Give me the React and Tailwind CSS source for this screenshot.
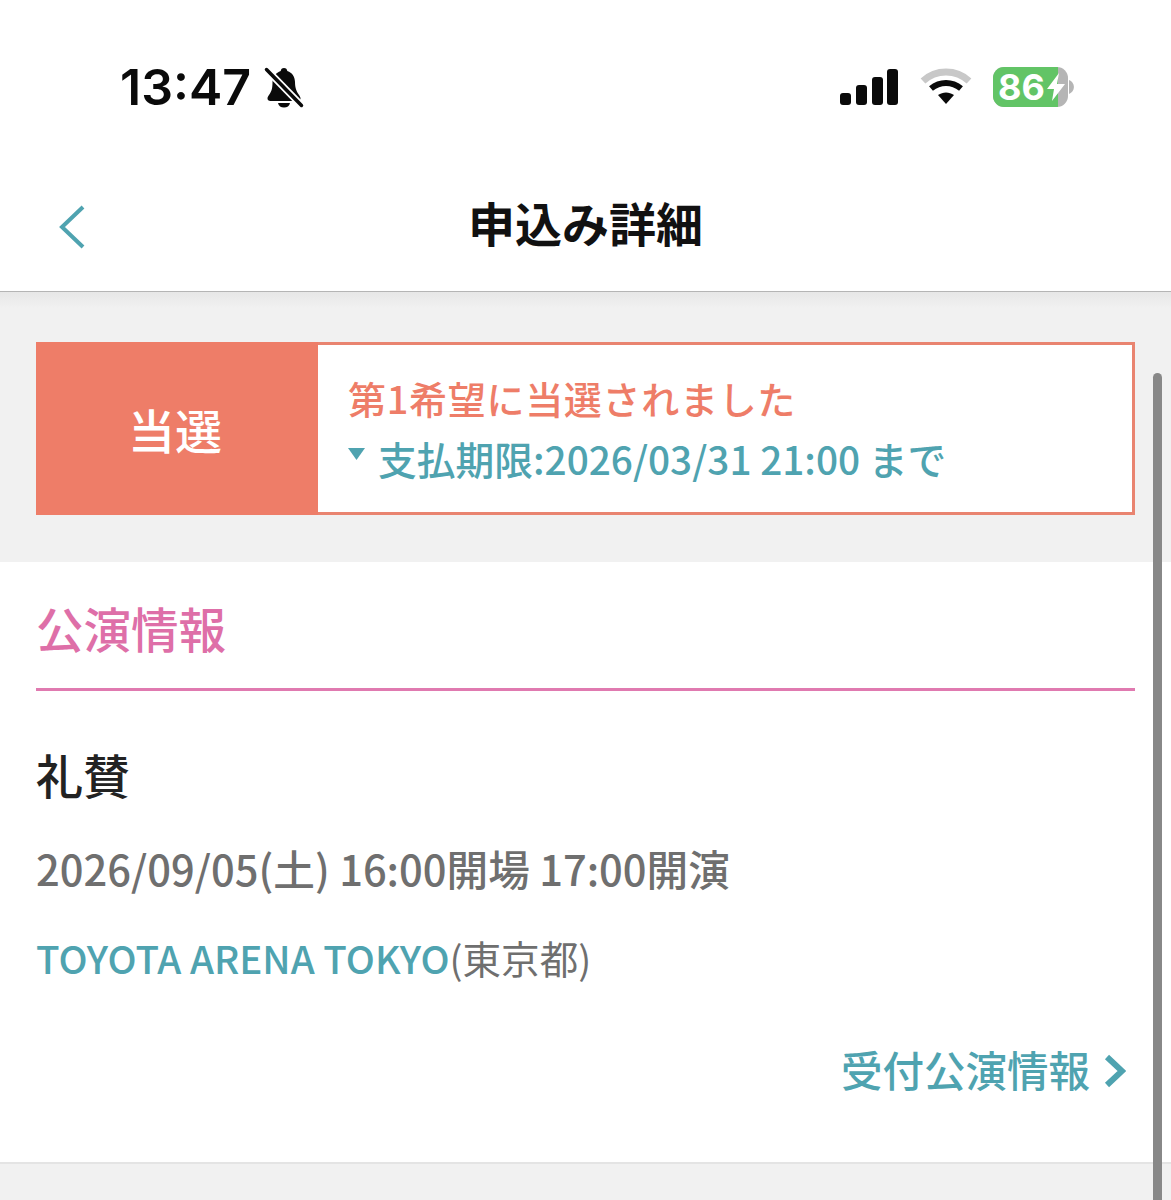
export default function App() {
  const cjk = { fontFamily: '"Noto Sans CJK JP", "Noto Sans", sans-serif' };
  return (
    <div style={cjk} className="relative w-[1171px] h-[1200px] overflow-hidden bg-[#f1f1f1]">
      <div className="bg-white h-[292px] border-b border-[#b5b5b5] flex flex-col">
        <div className="h-[160px] flex items-center justify-between pl-[120px] pr-[96px] pt-[14px]">
          <div className="flex items-center gap-[12px]">
            <span className="text-[50px] font-semibold leading-none text-[#0a0a0a]" style={{ fontFamily: 'Inter, sans-serif' }}>13:47</span>
            <svg width="42" height="42" viewBox="0 0 42 42">
              <path d="M21 2c2 0 3 1.300 3.300 3 5 1.500 7.700 6 7.700 11 0 6 1.500 9 3 11.500 1.500 2 2.500 3.500 2.500 5 0 1.300-1 2.500-3 2.500H7.500c-2 0-3-1.200-3-2.500 0-1.500 1-3 2.500-5 1.500-2.500 2.500-5 2.500-11.500C9.500 11 13 6.500 17.700 5 18 3.300 19 2 21 2z" fill="#0a0a0a" />
              <path d="M15 37h12c-.5 3-3 4.500-6 4.500s-5.500-1.500-6-4.500z" fill="#0a0a0a" />
              <path d="M3 3l36 37" stroke="#fff" strokeWidth="7" />
              <path d="M3.500 3.500l35 36" stroke="#0a0a0a" strokeWidth="3.500" strokeLinecap="round" />
            </svg>
          </div>
          <div className="flex items-center">
            <svg width="60" height="38" viewBox="0 0 60 38" className="mr-[21px]">
              <rect x="1" y="25" width="11" height="12" rx="3" fill="#0a0a0a" />
              <rect x="17" y="17" width="11" height="20" rx="3" fill="#0a0a0a" />
              <rect x="33" y="9" width="11" height="28" rx="3" fill="#0a0a0a" />
              <rect x="48" y="1" width="11" height="36" rx="3" fill="#0a0a0a" />
            </svg>
            <svg width="52" height="38" viewBox="0 0 52 38" className="mr-[21px]">
              <path d="M3 13C16 1 36 1 49 13" fill="none" stroke="#c8c8c8" strokeWidth="7" />
              <path d="M11 20.500c9-7.500 21-7.500 30 0" fill="none" stroke="#0a0a0a" strokeWidth="6" />
              <path d="M18 27c5-3.500 11-3.500 16 0l-8 9z" fill="#0a0a0a" />
            </svg>
            <div className="relative flex items-center w-[82px] h-[40px]">
              <div className="relative w-[76px] h-[40px]">
                <div className="absolute inset-0 rounded-[11px] overflow-hidden bg-[#b5b5b5]">
                  <div className="h-full w-[65px] bg-[#62c466]" />
                </div>
                <span className="absolute left-[5px] top-0 leading-[40px] text-[36px] font-bold text-white" style={{ fontFamily: 'Inter, sans-serif' }}>86</span>
                <svg width="20" height="30" viewBox="0 0 20 30" className="absolute left-[53px] top-[5px]">
                  <path d="M13 1L1 17h7l-2 12 13-17h-8z" fill="#fff" />
                </svg>
              </div>
              <svg width="6" height="14" viewBox="0 0 6 14" className="ml-[1px]"><path d="M0 0c3 1 5 4 5 7s-2 6-5 7z" fill="#b5b5b5" /></svg>
            </div>
          </div>
        </div>
        <div className="relative flex-1 flex items-center justify-center pb-[8px]">
          <svg width="28" height="44" viewBox="0 0 28 44" className="absolute left-[58px] top-[45px]">
            <path d="M25 2L4 22l21 20" fill="none" stroke="#4fa3b0" strokeWidth="4" />
          </svg>
          <h1 className="text-[47px] font-bold leading-none text-[#111]">申込み詳細</h1>
        </div>
      </div>

      <div className="h-[16px] -mb-[16px] bg-gradient-to-b from-[#e7e7e7] to-[#f1f1f1]" />

      <div className="px-[36px] pt-[50px] pb-[47px]">
        <div className="flex h-[173px] border-[3px] border-[#e98470] bg-white">
          <div className="w-[282px] -my-[3px] -ml-[3px] pl-[3px] bg-[#ee7d68] flex items-center justify-center text-white text-[47px] font-medium leading-none pr-[7px]">当選</div>
          <div className="flex flex-col pl-[30px] pt-[25px]">
            <p className="text-[38px] font-medium leading-[56px] text-[#ee7d68]" style={{ letterSpacing: '0.7px' }}>第1希望に当選されました</p>
            <p className="mt-[2px] flex items-center text-[38.750px] font-medium leading-[60px] text-[#4fa3b0]">
              <svg width="17" height="12" viewBox="0 0 17 12" className="mr-[13px] mb-[8px]"><path d="M0 0h17L8.500 12z" fill="#4fa3b0" /></svg>
              支払期限:2026/03/31 21:00 まで
            </p>
          </div>
        </div>
      </div>

      <div className="bg-white h-[602px] border-b-2 border-[#e4e4e4] px-[36px] flex flex-col">
        <h2 className="h-[129px] border-b-[3px] border-[#e07ab0] text-[47.500px] font-medium leading-none text-[#de6fa8] pt-[42px]">公演情報</h2>
        <p className="mt-[59px] text-[47px] font-medium leading-none text-[#222]">礼賛</p>
        <p className="mt-[51px] text-[41.660px] font-medium leading-none text-[#6f6f6f] whitespace-nowrap">2026/09/05(土) 16:00開場 17:00開演</p>
        <p className="mt-[48px] text-[38.600px] leading-none whitespace-nowrap text-[#6f6f6f]"><span className="font-medium text-[#4fa3b0]">TOYOTA ARENA TOKYO</span>(東京都)</p>
        <div className="mt-[73px] flex items-center justify-end pr-[9px]">
          <span className="text-[41.500px] font-medium leading-none text-[#4fa3b0]">受付公演情報</span>
          <svg width="22" height="34" viewBox="0 0 22 34" className="ml-[14px] mt-[2px]"><path d="M3 3l15 14L3 31" fill="none" stroke="#4fa3b0" strokeWidth="6" /></svg>
        </div>
      </div>

      <div className="absolute left-[1153px] top-[373px] w-[9px] h-[840px] rounded-full bg-[#888888]" />
    </div>
  );
}
